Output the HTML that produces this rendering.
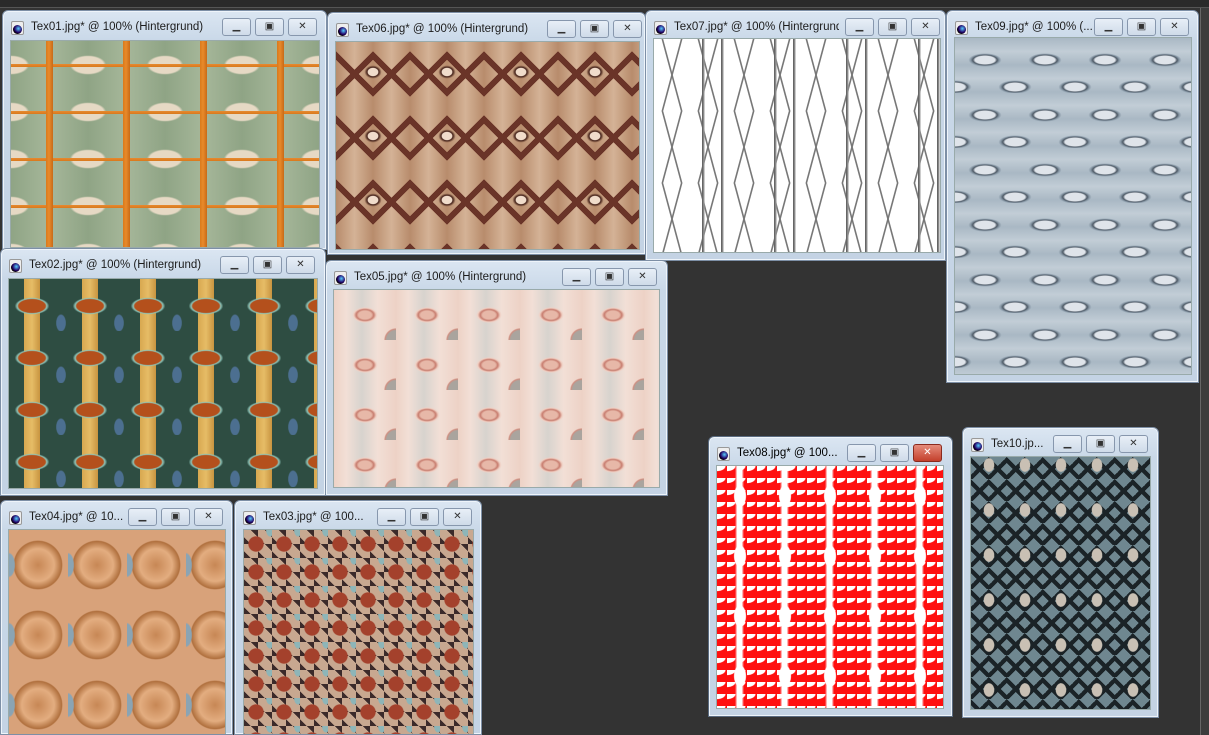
<!DOCTYPE html>
<html><head><meta charset="utf-8"><style>
*{margin:0;padding:0;box-sizing:border-box}
html,body{width:1209px;height:735px;overflow:hidden}
body{background:#333;position:relative;font-family:"Liberation Sans",sans-serif}
.top{position:absolute;left:0;top:0;width:1209px;height:8px;background:#2a2a2a;border-bottom:1px solid #555}
.rs{position:absolute;left:1200px;top:8px;width:9px;height:727px;background:#3c3c3c;border-left:1px solid #666}
.w{position:absolute;background:linear-gradient(#dbe6f2,#c9d8e8 30px,#c4d3e4);border:1px solid #7d8fa6;border-radius:6px 6px 0 0;box-shadow:inset 0 0 0 1px #eef4fa;overflow:hidden}
.t{position:absolute;left:28px;top:10px;font-size:11.5px;color:#1c1c1c;white-space:nowrap;overflow:hidden}
.ic{position:absolute;left:8px;top:10px;width:13px;height:14px;background:#eee;border:1px solid #999;border-radius:2px}
.ic:after{content:"";position:absolute;left:1px;top:3px;width:9px;height:9px;border-radius:50%;background:radial-gradient(circle at 60% 40%,#5cf 0,#206 50%,#000 70%)}
.b{position:absolute;top:7px;width:29px;height:18px;border:1px solid #8797ad;border-radius:3px;background:linear-gradient(#e8eff7,#cfdbe9);font-size:10px;text-align:center;line-height:16px;color:#333}
.c{position:absolute;left:7px;top:29px;border:1px solid #9aa;overflow:hidden}
</style></head><body>
<div class="top"></div><div class="rs"></div>

<div class="w" style="left:2px;top:10px;width:325px;height:240px">
<div class="ic"></div><div class="t">Tex01.jpg* @ 100% (Hintergrund)</div>
<div class="b" style="left:219px">▁</div><div class="b" style="left:252px">▣</div><div class="b" style="left:285px">✕</div>
<div class="c" style="top:29px;width:310px;height:208px;background:
linear-gradient(90deg,transparent 35px,#d9791c 35px,#e88a2a 38px,#c86a18 42px,transparent 42px) 0 0/77px 100%,
linear-gradient(0deg,transparent 21px,#d9791c 21px,#e68a30 24px,transparent 24px) 0 0/100% 47px,
radial-gradient(ellipse 26px 14px at 0 24px,#e6d9c4 60%,transparent 70%) 0 0/77px 47px,
radial-gradient(ellipse 26px 14px at 77px 24px,#e6d9c4 60%,transparent 70%) 0 0/77px 47px,
linear-gradient(90deg,#8fa485,#a6b79a,#8fa485) 0 0/77px 100%"></div></div>

<div class="w" style="left:327px;top:12px;width:319px;height:243px">
<div class="ic"></div><div class="t">Tex06.jpg* @ 100% (Hintergrund)</div>
<div class="b" style="left:219px">▁</div><div class="b" style="left:252px">▣</div><div class="b" style="left:285px">✕</div>
<div class="c" style="top:28px;width:305px;height:209px;background:
radial-gradient(ellipse 9px 7px at 37px 30px,#f0dccb 55%,#3f1c14 65%,transparent 95%) 0 0/74px 64px,
linear-gradient(45deg,transparent 46%,#6a3428 46%,#6a3428 54%,transparent 54%) 0 0/37px 64px,
linear-gradient(-45deg,transparent 46%,#6a3428 46%,#6a3428 54%,transparent 54%) 0 0/37px 64px,
linear-gradient(90deg,#b88c6c,#d4b296,#b88c6c) 0 0/37px 100%"></div></div>

<div class="w" style="left:645px;top:10px;width:301px;height:251px">
<div class="ic"></div><div class="t" style="width:165px">Tex07.jpg* @ 100% (Hintergrund)</div>
<div class="b" style="left:199px">▁</div><div class="b" style="left:232px">▣</div><div class="b" style="left:265px">✕</div>
<div class="c" style="top:27px;width:288px;height:215px;background:
linear-gradient(90deg,transparent 48px,#555 48px,#999 50px,transparent 51px,transparent 67px,#555 67px,#999 69px,transparent 70px) 0 0/72px 100%,
linear-gradient(75deg,transparent 48%,#777 49%,#777 51%,transparent 52%) 0 0/36px 72px,
linear-gradient(-75deg,transparent 48%,#777 49%,#777 51%,transparent 52%) 0 0/36px 72px,#fff"></div></div>

<div class="w" style="left:946px;top:10px;width:253px;height:373px">
<div class="ic"></div><div class="t">Tex09.jpg* @ 100% (...</div>
<div class="b" style="left:147px">▁</div><div class="b" style="left:180px">▣</div><div class="b" style="left:213px">✕</div>
<div class="c" style="top:26px;width:238px;height:338px;background:
radial-gradient(ellipse 22px 9px at 30px 22px,#dfe4ea 45%,#4e5a66 55%,#8898a6 65%,transparent 75%) 0 0/60px 55px,
radial-gradient(ellipse 22px 9px at 0 49px,#dfe4ea 45%,#4e5a66 55%,#8898a6 65%,transparent 75%) 0 0/60px 55px,
radial-gradient(ellipse 22px 9px at 60px 49px,#dfe4ea 45%,#4e5a66 55%,#8898a6 65%,transparent 75%) 0 0/60px 55px,
linear-gradient(#a9b8c4,#c2cdd6,#a9b8c4) 0 0/100% 27px"></div></div>

<div class="w" style="left:0px;top:248px;width:326px;height:248px">
<div class="ic"></div><div class="t">Tex02.jpg* @ 100% (Hintergrund)</div>
<div class="b" style="left:219px">▁</div><div class="b" style="left:252px">▣</div><div class="b" style="left:285px">✕</div>
<div class="c" style="top:29px;width:310px;height:211px;background:
radial-gradient(ellipse 24px 12px at 23px 27px,#b4501c 55%,#8dc4b8 62%,transparent 72%) 0 0/58px 52px,
linear-gradient(90deg,transparent 15px,#d8a850 15px,#e6bc66 23px,#c89440 31px,transparent 31px) 0 0/58px 100%,
radial-gradient(ellipse 8px 14px at 52px 44px,#4c6f90 55%,transparent 65%) 0 0/58px 52px,
#2e4d42"></div></div>

<div class="w" style="left:325px;top:260px;width:343px;height:236px">
<div class="ic"></div><div class="t">Tex05.jpg* @ 100% (Hintergrund)</div>
<div class="b" style="left:236px">▁</div><div class="b" style="left:269px">▣</div><div class="b" style="left:302px">✕</div>
<div class="c" style="top:28px;width:327px;height:199px;background:
radial-gradient(circle 11px at 62px 50px,#aaa49e 85%,#d08e80 100%,transparent 110%) 0 0/62px 50px,
radial-gradient(ellipse 16px 10px at 31px 25px,#e7b8a8 40%,#c87e70 55%,#f0d0c4 70%,transparent 80%) 0 0/62px 50px,
linear-gradient(90deg,#edd2c6,#f2dfd6 20%,#d7d3ce 45%,#f2dfd6 70%,#edd2c6) 0 0/62px 100%"></div></div>

<div class="w" style="left:0px;top:500px;width:233px;height:235px">
<div class="ic"></div><div class="t">Tex04.jpg* @ 10...</div>
<div class="b" style="left:127px">▁</div><div class="b" style="left:160px">▣</div><div class="b" style="left:193px">✕</div>
<div class="c" style="top:28px;width:218px;height:220px;background:
radial-gradient(ellipse 9px 18px at 0 35px,#8aa4b4 60%,transparent 70%) 0 0/59px 70px,
radial-gradient(circle 27px at 29px 35px,#c78755 0,#e3ad80 60%,#b0703e 88%,transparent 92%) 0 0/59px 70px,
#d8a27a"></div></div>

<div class="w" style="left:234px;top:500px;width:248px;height:235px">
<div class="ic"></div><div class="t">Tex03.jpg* @ 100...</div>
<div class="b" style="left:142px">▁</div><div class="b" style="left:175px">▣</div><div class="b" style="left:208px">✕</div>
<div class="c" style="left:8px;top:28px;width:231px;height:220px;background:
radial-gradient(circle 9px at 12px 14px,#a4412c 80%,transparent 90%) 0 0/28px 28px,
radial-gradient(ellipse 6px 10px at 26px 0,#8db5b8 60%,transparent 70%) 0 0/28px 28px,
linear-gradient(45deg,#3b2a2a 25%,transparent 25%,transparent 75%,#3b2a2a 75%) 0 0/14px 14px,
#c8a890"></div></div>

<div class="w" style="left:708px;top:436px;width:245px;height:281px;border-color:#5a6b80">
<div class="ic"></div><div class="t" style="color:#000">Tex08.jpg* @ 100...</div>
<div class="b" style="left:138px">▁</div><div class="b" style="left:171px">▣</div><div class="b" style="left:204px;background:linear-gradient(#e58c7c,#c4402c);color:#fff;border-color:#8a2a1e">✕</div>
<div class="c" style="top:28px;width:228px;height:244px;background:
radial-gradient(ellipse 10px 6px at 0 0,#fff 80%,transparent 90%) 0 0/10px 12px,
radial-gradient(ellipse 8px 14px at 23px 30px,#fff 70%,transparent 80%) 0 0/45px 60px,
linear-gradient(90deg,transparent 40%,#fff 45%,#fff 55%,transparent 60%) 0 0/45px 30px,
#ff1010"></div></div>

<div class="w" style="left:962px;top:427px;width:197px;height:291px">
<div class="ic"></div><div class="t">Tex10.jp...</div>
<div class="b" style="left:90px">▁</div><div class="b" style="left:123px">▣</div><div class="b" style="left:156px">✕</div>
<div class="c" style="top:28px;width:181px;height:254px;background:
radial-gradient(ellipse 7px 9px at 18px 8px,#c9c0b4 70%,transparent 80%) 0 0/36px 45px,
linear-gradient(45deg,transparent 40%,#1b2327 40%,#1b2327 55%,transparent 55%) 0 0/18px 22px,
linear-gradient(-45deg,transparent 40%,#1b2327 40%,#1b2327 55%,transparent 55%) 0 0/18px 22px,
#6f8790"></div></div>
</body></html>
